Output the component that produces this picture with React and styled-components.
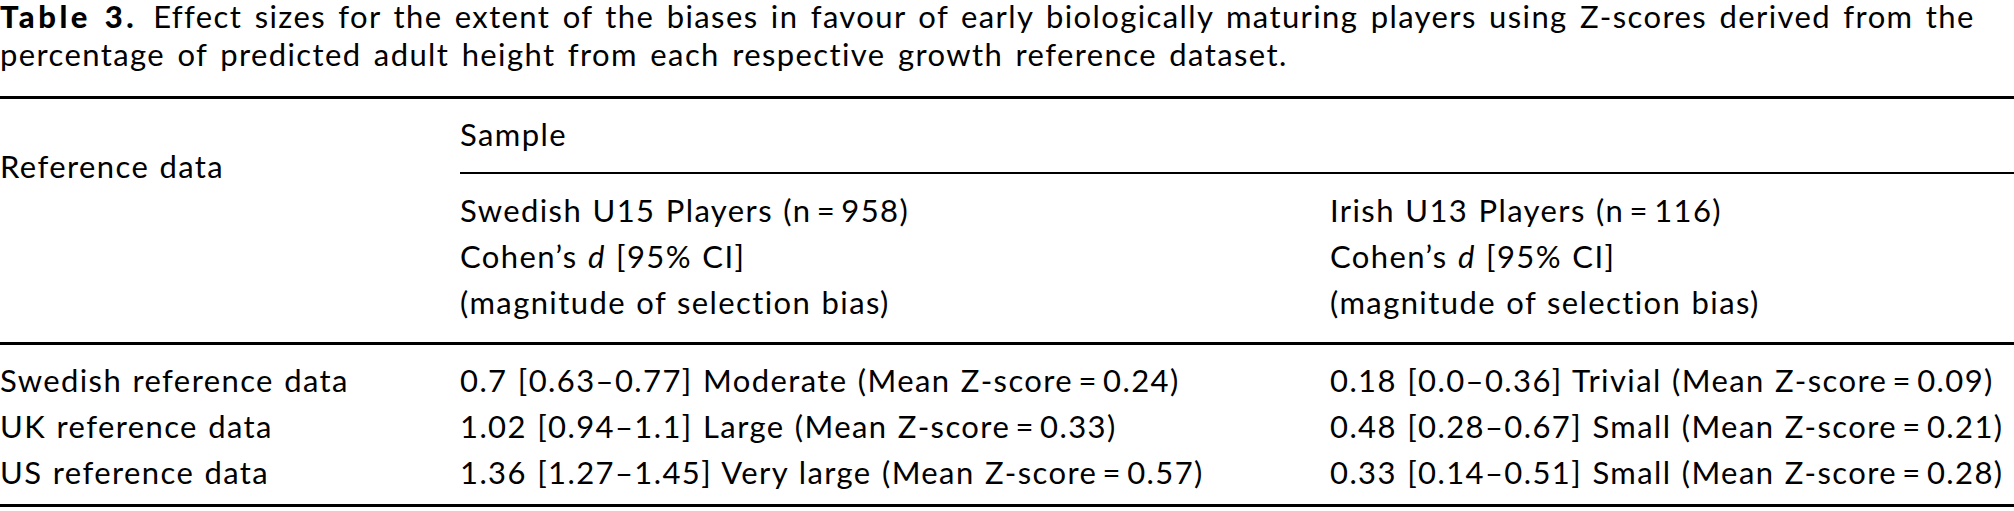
import React from "react";
import styled, { createGlobalStyle } from "styled-components";

const Global = createGlobalStyle`
  html, body {
    margin: 0;
    padding: 0;
    background: #ffffff;
  }
  body {
    font-family: Lato, "Open Sans", "Liberation Sans", sans-serif;
    color: #000000;
  }
`;

const Page = styled.div`
  width: 2014px;
  height: 511px;
  overflow: hidden;
  font-size: 31px;
  letter-spacing: 1.4px;
  word-spacing: 1px;
`;

const Caption = styled.p`
  margin: -3px 0 23px;
  line-height: 38px;
  word-spacing: 3px;
`;

const Label = styled.b`
  font-weight: 900;
  letter-spacing: 3.5px;
  margin-right: 16px;
`;

const Table = styled.div`
  border-top: 3px solid #000;
  border-bottom: 3px solid #000;
`;

const Cols = styled.div`
  display: grid;
  grid-template-columns: 460px 870px 1fr;
  line-height: 46px;
`;

const Head = styled(Cols)`
  grid-template-rows: auto auto;
  border-bottom: 3px solid #000;
`;

const StubHead = styled.div`
  grid-row: 1 / 3;
  padding-top: 44px;
`;

const Spanner = styled.div`
  grid-column: 2 / 4;
  padding: 12px 0 15px;
  border-bottom: 2px solid #000;
`;

const SubHead = styled.div`
  padding: 13px 0 17px;
`;

const Body = styled(Cols)`
  padding: 12px 0 9px;
`;

const Cell = styled.div`
  white-space: nowrap;
`;

const samples = [
  { name: "Swedish U15 Players", n: 958 },
  { name: "Irish U13 Players", n: 116 },
];

const rows = [
  {
    ref: "Swedish reference data",
    values: [
      "0.7 [0.63–0.77] Moderate (Mean Z-score\u2009=\u20090.24)",
      "0.18 [0.0–0.36] Trivial (Mean Z-score\u2009=\u20090.09)",
    ],
  },
  {
    ref: "UK reference data",
    values: [
      "1.02 [0.94–1.1] Large (Mean Z-score\u2009=\u20090.33)",
      "0.48 [0.28–0.67] Small (Mean Z-score\u2009=\u20090.21)",
    ],
  },
  {
    ref: "US reference data",
    values: [
      "1.36 [1.27–1.45] Very large (Mean Z-score\u2009=\u20090.57)",
      "0.33 [0.14–0.51] Small (Mean Z-score\u2009=\u20090.28)",
    ],
  },
];

export default function App() {
  return (
    <Page>
      <Global />
      <Caption>
        <Label>Table 3.</Label>
        Effect sizes for the extent of the biases in favour of early biologically maturing players using Z-scores derived from the
        <br />
        percentage of predicted adult height from each respective growth reference dataset.
      </Caption>
      <Table>
        <Head>
          <StubHead>Reference data</StubHead>
          <Spanner>Sample</Spanner>
          {samples.map((s) => (
            <SubHead key={s.name}>
              {s.name} (n{"\u2009=\u2009"}{s.n})
              <br />
              Cohen’s <i>d</i> [95% CI]
              <br />
              (magnitude of selection bias)
            </SubHead>
          ))}
        </Head>
        <Body>
          {rows.map((r) => (
            <React.Fragment key={r.ref}>
              <Cell>{r.ref}</Cell>
              {r.values.map((v, i) => (
                <Cell key={i}>{v}</Cell>
              ))}
            </React.Fragment>
          ))}
        </Body>
      </Table>
    </Page>
  );
}
